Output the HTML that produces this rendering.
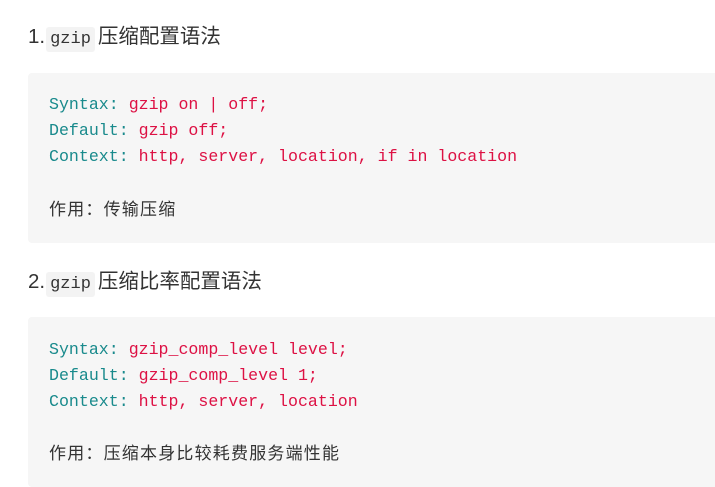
<!DOCTYPE html>
<html><head><meta charset="utf-8"><style>
body{margin:0;background:#fff;width:715px;height:480px;overflow:hidden;font-family:"Liberation Sans","Noto Sans CJK SC",sans-serif;color:#333}
h{position:absolute;left:28px;font-size:20.5px;line-height:28px;white-space:nowrap}
h code{font-family:"Liberation Mono",monospace;font-size:17px;background:#f3f3f3;border-radius:3px;padding:3px 4px;margin:0 3px 0 1px}
.blk{position:absolute;left:28px;width:700px;background:#f6f6f6;border-radius:4px}
.l{position:absolute;left:49px;font-family:"Liberation Mono",monospace;font-size:16.6px;white-space:pre;line-height:26px}
.t{color:#198a8c}.r{color:#dd1144}
.z{position:absolute;left:49px;font-size:17px;letter-spacing:1.2px;color:#333;line-height:26px;font-family:"Noto Sans CJK SC",sans-serif}
</style></head><body>
<h style="top:23px">1.<code>gzip</code>压缩配置语法</h>
<div class="blk" style="top:73px;height:170px"></div>
<div class="l" style="top:92px"><span class="t">Syntax:</span> <span class="r">gzip on | off;</span></div>
<div class="l" style="top:118px"><span class="t">Default:</span> <span class="r">gzip off;</span></div>
<div class="l" style="top:144px"><span class="t">Context:</span> <span class="r">http, server, location, if in location</span></div>
<div class="z" style="top:195px">作用：传输压缩</div>
<h style="top:268px">2.<code>gzip</code>压缩比率配置语法</h>
<div class="blk" style="top:317px;height:170px"></div>
<div class="l" style="top:337px"><span class="t">Syntax:</span> <span class="r">gzip_comp_level level;</span></div>
<div class="l" style="top:363px"><span class="t">Default:</span> <span class="r">gzip_comp_level 1;</span></div>
<div class="l" style="top:389px"><span class="t">Context:</span> <span class="r">http, server, location</span></div>
<div class="z" style="top:439px">作用：压缩本身比较耗费服务端性能</div>
</body></html>
